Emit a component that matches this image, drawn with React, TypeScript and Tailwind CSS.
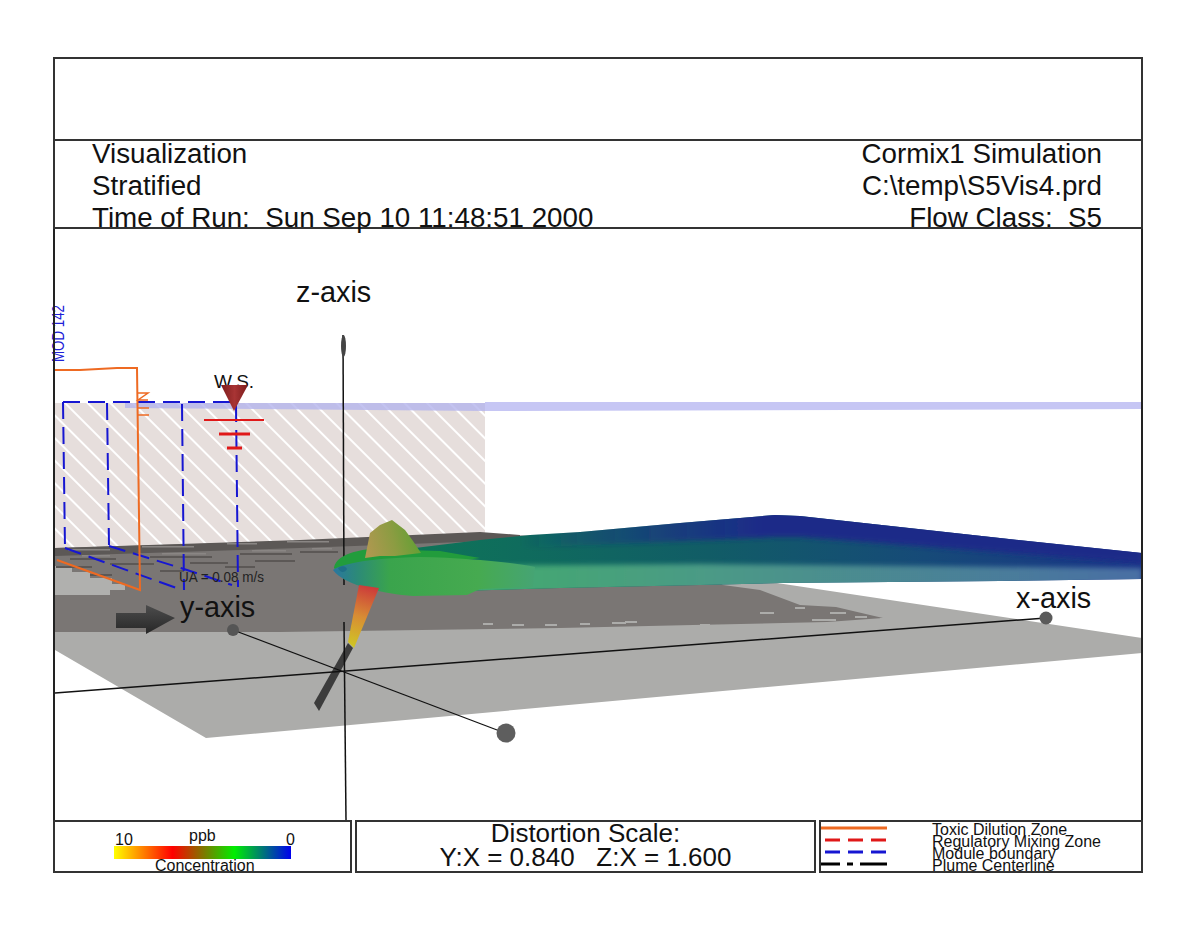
const streaks = [
  [56, 552, 60], [130, 549, 70], [215, 546, 48], [275, 544, 60], [70, 558, 46], [150, 556, 62], [240, 553, 52],
  [300, 551, 38], [56, 566, 36], [110, 563, 44], [190, 562, 38], [255, 560, 40], [425, 540, 40], [440, 545, 30],
  [470, 536, 30], [160, 570, 24], [225, 566, 30], [90, 574, 22],
];

const lightDashes = [
  [483, 623, 10], [512, 624, 12], [545, 624, 12], [580, 623, 10], [612, 622, 14], [625, 621, 12], [700, 624, 10],
  [760, 612, 14], [795, 607, 10], [812, 619, 24], [830, 612, 16], [855, 616, 12], [880, 618, 10], [60, 636, 14],
];

function Scene() {
  return (
    <svg viewBox="53 229 1089 591" className="block h-[591px] w-[1089px] overflow-visible">
      <defs>
        <pattern id="hatch" width="16" height="100" patternUnits="userSpaceOnUse" patternTransform="rotate(-45)">
          <rect width="16" height="100" fill="#e6dedc" />
          <rect width="2" height="100" fill="#ffffff" />
        </pattern>
        <linearGradient id="body" gradientUnits="userSpaceOnUse" x1="420" y1="0" x2="1142" y2="0">
          <stop offset="0" stopColor="#0e7458" />
          <stop offset="0.4" stopColor="#115c66" />
          <stop offset="0.7" stopColor="#164a78" />
          <stop offset="1" stopColor="#1a3488" />
        </linearGradient>
        <linearGradient id="topStrip" gradientUnits="userSpaceOnUse" x1="520" y1="0" x2="760" y2="0">
          <stop offset="0" stopColor="#1b2c88" stopOpacity="0" />
          <stop offset="1" stopColor="#1b2c88" />
        </linearGradient>
        <linearGradient id="belly" gradientUnits="userSpaceOnUse" x1="420" y1="0" x2="1142" y2="0">
          <stop offset="0" stopColor="#3fae68" />
          <stop offset="0.4" stopColor="#4b9a86" />
          <stop offset="1" stopColor="#4a6ea4" />
        </linearGradient>
        <linearGradient id="disc" gradientUnits="userSpaceOnUse" x1="333" y1="0" x2="535" y2="0">
          <stop offset="0" stopColor="#2a76a0" />
          <stop offset="0.12" stopColor="#2c8a78" />
          <stop offset="0.28" stopColor="#3aa44c" />
          <stop offset="0.72" stopColor="#46aa50" />
          <stop offset="1" stopColor="#46a474" />
        </linearGradient>
        <linearGradient id="dome" gradientUnits="userSpaceOnUse" x1="365" y1="545" x2="420" y2="530">
          <stop offset="0" stopColor="#b09850" />
          <stop offset="0.5" stopColor="#8c9c42" />
          <stop offset="1" stopColor="#5ca032" />
        </linearGradient>
        <linearGradient id="riser" gradientUnits="userSpaceOnUse" x1="368" y1="586" x2="350" y2="646">
          <stop offset="0" stopColor="#cc3a3a" />
          <stop offset="0.5" stopColor="#d88c34" />
          <stop offset="1" stopColor="#cfc624" />
        </linearGradient>
        <linearGradient id="arrow" x1="0" y1="0" x2="0" y2="1">
          <stop offset="0" stopColor="#4c4c4c" />
          <stop offset="0.5" stopColor="#3a3a3a" />
          <stop offset="1" stopColor="#262626" />
        </linearGradient>
        <linearGradient id="tri" x1="0" y1="0" x2="1" y2="0">
          <stop offset="0" stopColor="#7c1c1c" />
          <stop offset="0.5" stopColor="#a83434" />
          <stop offset="1" stopColor="#7c1c1c" />
        </linearGradient>
        <clipPath id="bodyClip">
          <polygon points="415,548 480,540 530,535 580,532 680,523 775,515 800,516 1000,538 1142,553 1142,579 1000,581 780,583 700,585 560,588 420,592" />
        </clipPath>
        <filter id="soft" x="-10%" y="-50%" width="120%" height="200%">
          <feGaussianBlur stdDeviation="2.500" />
        </filter>
      </defs>

      {/* back wall and water surface */}
      <rect x="55" y="403" width="430" height="150" fill="url(#hatch)" />
      <polygon points="125,403 485,403 485,411 125,408" fill="#b4b4ec" fillOpacity="0.8" />
      <polygon points="485,402 1142,402 1142,409 485,411" fill="#c6c6f4" />

      {/* river bed */}
      <polygon points="55,565 480,545 640,558 777,583 1142,638 1142,653 206,738 55,650" fill="#acacaa" />
      <polygon points="55,548 300,541 480,534 650,540 723,585 760,590 800,605 836,607 870,615 883,618 827,622 693,625 560,628 280,632 55,632" fill="#7a7674" />
      <polygon points="55,566 72,566 72,572 90,572 90,578 112,578 112,584 125,584 125,590 110,590 110,595 55,595" fill="#b0b0ae" />
      <polygon points="55,548 180,544 300,540 480,532 520,535 520,540 300,548 55,556" fill="#5c5856" />
      {streaks.map(([x, y, w]) => (
        <rect key={`${x}-${y}`} x={x} y={y} width={w} height="2" fill="#5c5856" />
      ))}
      {streaks.slice(0, 8).map(([x, y, w]) => (
        <rect key={`g-${x}-${y}`} x={x + 12} y={y - 3} width={w - 18} height="1.500" fill="#8a8684" />
      ))}
      {lightDashes.map(([x, y, w]) => (
        <rect key={`${x}-${y}`} x={x} y={y} width={w} height="2" fill="#acacaa" />
      ))}

      {/* module boundary */}
      <g fill="none" stroke="#1616d2" strokeWidth="2" strokeDasharray="17 8">
        <path d="M63 402H236" />
        <path d="M63 402L65 548" />
        <path d="M107 403L109 546" />
        <path d="M182 404L184 590" />
        <path d="M236 405L238 587" />
        <path d="M65 548L182 590" />
        <path d="M109 546L184 569L232 585" />
      </g>

      {/* toxic dilution zone */}
      <g fill="none" stroke="#ee6a22" strokeWidth="2">
        <path d="M55 370H80L117 368H137L140 590L57 560" />
        <path d="M138 408H149M138 415H149M138 393H148L138 400H148" strokeWidth="1.500" />
      </g>

      {/* regulatory marks and water surface symbol */}
      <g stroke="#e01818" strokeWidth="2">
        <path d="M204 420H264" />
        <path d="M219 434H250" strokeWidth="3" />
        <path d="M227 448H242" strokeWidth="3" />
      </g>
      <text x="214" y="388" fontSize="19" fill="#111">W.S.</text>
      <polygon points="221,385 248,385 234,411" fill="url(#tri)" />

      {/* axes behind the plume */}
      <path d="M343 335L344 585" stroke="#111" strokeWidth="1.500" />
      <ellipse cx="343.500" cy="346" rx="2.500" ry="11" fill="#444" />

      {/* plume body */}
      <g clipPath="url(#bodyClip)">
        <rect x="415" y="510" width="727" height="90" fill="url(#body)" />
        <polygon points="520,520 775,508 800,508 1142,545 1142,563 800,537 775,537 520,548" fill="url(#topStrip)" filter="url(#soft)" />
        <polygon points="415,566 700,564 1142,568 1142,585 415,595" fill="url(#belly)" filter="url(#soft)" />
      </g>
      <path d="M334 568C335 558 350 551 370 549L440 551L480 558L420 566L345 580Z" fill="#229c3c" />
      <path d="M365 558L370 533L380 525L392 520L405 530L413 541L421 553L395 556L380 556Z" fill="url(#dome)" />
      <path d="M333 570C340 565 365 558 420 557C470 558 510 562 535 567L533 587L480 589L467 595L413 596C385 594 345 586 333 570Z" fill="url(#disc)" />
      <path d="M338 568C342 565 346 566 347 569C345 573 340 573 338 568Z" fill="#1f6f88" />
      <polygon points="359,585 379,588 354,648 348,642" fill="url(#riser)" />
      <polygon points="348,643 353,648 319,711 314,703" fill="#3c3c3c" />

      {/* axes in front */}
      <path d="M344 622L346 820" stroke="#111" strokeWidth="1.500" />
      <path d="M55 693L1046 618" stroke="#111" strokeWidth="1.500" />
      <path d="M233 630L505 733" stroke="#111" strokeWidth="1.200" />
      <circle cx="1046" cy="618" r="6.500" fill="#5a5a5a" />
      <circle cx="233" cy="630" r="6" fill="#555" />
      <circle cx="506" cy="733" r="9.500" fill="#5e5e5e" />
      <polygon points="116,613 146,613 146,605 175,618 146,634 146,628 116,628" fill="url(#arrow)" />

      <text x="296" y="302" fontSize="28.800" fill="#111">z-axis</text>
      <text x="180" y="617" fontSize="28.800" fill="#111">y-axis</text>
      <text x="1016" y="608" fontSize="28.800" fill="#111">x-axis</text>
      <text x="179" y="582" fontSize="15" textLength="85" lengthAdjust="spacingAndGlyphs" fill="#222">UA = 0.08 m/s</text>
      <text transform="translate(64 362) rotate(-90)" fontSize="16" textLength="57" lengthAdjust="spacingAndGlyphs" fill="#2020d8">MOD 142</text>
    </svg>
  );
}

function LegendLines() {
  return (
    <svg viewBox="0 0 70 48" className="h-12 w-[70px] shrink-0">
      <path d="M0 6H66" stroke="#ee6a22" strokeWidth="3" />
      <path d="M4 18H66" stroke="#e01818" strokeWidth="3" strokeDasharray="15 8" />
      <path d="M4 30H66" stroke="#1616d2" strokeWidth="3" strokeDasharray="15 8" />
      <path d="M0 42H19M26 42H32M39 42H66" stroke="#000" strokeWidth="3" />
    </svg>
  );
}

export default function App() {
  return (
    <div className="h-[927px] w-[1200px] bg-white pl-[53px] pt-[57px] font-['Liberation_Sans',Arial,sans-serif] text-[#111]">
      <div className="flex w-[1090px] flex-col">
        <div className="h-[82px] border-2 border-b-0 border-[#333]" />
        <div className="flex h-[90px] justify-between border-2 border-[#333] pl-[37px] pr-[39px] text-[27.75px] leading-[32px]">
          <div className="-mt-[3px]">
            <div>Visualization</div>
            <div>Stratified</div>
            <div className="whitespace-pre">Time of Run:  Sun Sep 10 11:48:51 2000</div>
          </div>
          <div className="-mt-[3px] text-right">
            <div>Cormix1 Simulation</div>
            <div>C:\temp\S5Vis4.prd</div>
            <div className="whitespace-pre">Flow Class:  S5</div>
          </div>
        </div>
        <div className="relative h-[591px] w-[1090px]">
          <Scene />
          <div className="absolute inset-y-0 left-0 w-[2px] bg-[#222]" />
          <div className="absolute inset-y-0 right-0 w-[2px] bg-[#222]" />
        </div>
        <div className="flex h-[53px] gap-[3px]">
          <div className="relative w-[299px] border-2 border-[#333]">
            <span className="absolute left-[60px] top-[9px] text-[16px] leading-[18px]">10</span>
            <span className="absolute left-[134px] top-[6px] text-[16px] leading-[16px]">ppb</span>
            <span className="absolute left-[231px] top-[9px] text-[16px] leading-[18px]">0</span>
            <div className="absolute left-[59px] top-[24px] h-[13px] w-[177px] bg-[linear-gradient(to_right,#ffff00,#ff0000_33%,#00ee00_68%,#0000ee)]" />
            <span className="absolute left-[100px] top-[35px] text-[16px] leading-[18px]">Concentration</span>
          </div>
          <div className="flex w-[461px] flex-col items-center border-2 border-[#333] text-[26px] leading-[24px]">
            <div className="-mt-px">Distortion Scale:</div>
            <div className="whitespace-pre">Y:X = 0.840   Z:X = 1.600</div>
          </div>
          <div className="flex flex-1 border-2 border-[#333]">
            <LegendLines />
            <div className="ml-[41px] flex flex-col pt-[2px] text-[16px] leading-[12px]">
              <div>Toxic Dilution Zone</div>
              <div>Regulatory Mixing Zone</div>
              <div>Module boundary</div>
              <div>Plume Centerline</div>
            </div>
          </div>
        </div>
      </div>
    </div>
  );
}
